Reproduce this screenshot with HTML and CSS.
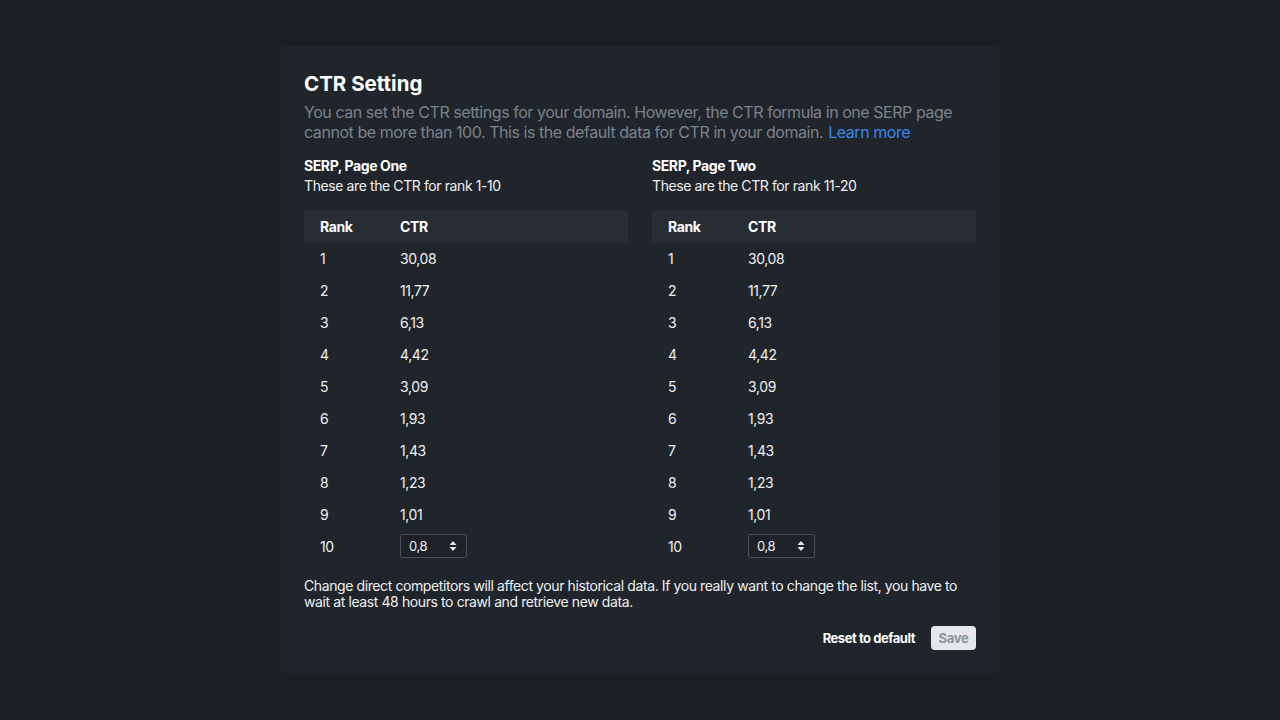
FILE: index.html
```html
<!DOCTYPE html>
<html lang="en">
<head>
<meta charset="utf-8">
<title>CTR Setting</title>
<link rel="stylesheet" href="styles.css">
</head>
<body>
<div class="card">
  <h1 class="title">CTR Setting</h1>
  <p class="desc">You can set the CTR settings for your domain. However, the CTR formula in one SERP page cannot be more than 100. This is the default data for CTR in your domain. <a class="link" href="#">Learn more</a></p>
  <div class="cols">
    <div class="col">
      <div class="sec-title">SERP, Page One</div>
      <div class="sec-sub">These are the CTR for rank 1-10</div>
      <table class="tbl">
        <thead><tr><th class="c-rank">Rank</th><th>CTR</th></tr></thead>
        <tbody>
          <tr><td class="c-rank">1</td><td>30,08</td></tr>
          <tr><td class="c-rank">2</td><td>11,77</td></tr>
          <tr><td class="c-rank">3</td><td>6,13</td></tr>
          <tr><td class="c-rank">4</td><td>4,42</td></tr>
          <tr><td class="c-rank">5</td><td>3,09</td></tr>
          <tr><td class="c-rank">6</td><td>1,93</td></tr>
          <tr><td class="c-rank">7</td><td>1,43</td></tr>
          <tr><td class="c-rank">8</td><td>1,23</td></tr>
          <tr><td class="c-rank">9</td><td>1,01</td></tr>
          <tr><td class="c-rank">10</td><td><span class="num"><span>0,8</span><svg class="spin" width="8" height="12" viewBox="0 0 8 12"><path d="M4 1 L7.5 5 H0.5 Z M4 11 L7.5 7 H0.5 Z" fill="#e6e8eb"/></svg></span></td></tr>
        </tbody>
      </table>
    </div>
    <div class="col">
      <div class="sec-title">SERP, Page Two</div>
      <div class="sec-sub">These are the CTR for rank 11-20</div>
      <table class="tbl">
        <thead><tr><th class="c-rank">Rank</th><th>CTR</th></tr></thead>
        <tbody>
          <tr><td class="c-rank">1</td><td>30,08</td></tr>
          <tr><td class="c-rank">2</td><td>11,77</td></tr>
          <tr><td class="c-rank">3</td><td>6,13</td></tr>
          <tr><td class="c-rank">4</td><td>4,42</td></tr>
          <tr><td class="c-rank">5</td><td>3,09</td></tr>
          <tr><td class="c-rank">6</td><td>1,93</td></tr>
          <tr><td class="c-rank">7</td><td>1,43</td></tr>
          <tr><td class="c-rank">8</td><td>1,23</td></tr>
          <tr><td class="c-rank">9</td><td>1,01</td></tr>
          <tr><td class="c-rank">10</td><td><span class="num"><span>0,8</span><svg class="spin" width="8" height="12" viewBox="0 0 8 12"><path d="M4 1 L7.5 5 H0.5 Z M4 11 L7.5 7 H0.5 Z" fill="#e6e8eb"/></svg></span></td></tr>
        </tbody>
      </table>
    </div>
  </div>
  <p class="note">Change direct competitors will affect your historical data. If you really want to change the list, you have to wait at least 48 hours to crawl and retrieve new data.</p>
  <div class="actions">
    <button class="btn-reset">Reset to default</button>
    <button class="btn-save">Save</button>
  </div>
</div>
</body>
</html>
```

FILE: styles.css
```css
* { box-sizing: border-box; }
html, body { margin: 0; padding: 0; }
body {
  background: #1b1e23;
  font-family: Inter, "Noto Sans", sans-serif;
  color: #f3f4f6;
  width: 1280px;
  height: 720px;
  padding-top: 46px;
  letter-spacing: -0.025em;
}
.card {
  width: 720px;
  margin: 0 auto;
  background: #20252b;
  border-radius: 6px;
  padding: 24px 24px 23px;
}
.title {
  margin: 0;
  font-size: 20.5px;
  line-height: 28px;
  font-weight: 700;
  letter-spacing: 0;
  color: #ffffff;
}
.desc {
  margin: 4px 0 0;
  font-size: 16px;
  line-height: 20px;
  letter-spacing: -0.028em;
  color: #7b828c;
}
.link { color: #3b86f0; text-decoration: none; margin-left: 1px; }
.cols {
  display: flex;
  gap: 24px;
  margin-top: 14px;
}
.col { flex: 1; }
.sec-title {
  font-size: 14px;
  line-height: 20px;
  font-weight: 700;
  color: #ffffff;
}
.sec-sub {
  font-size: 14px;
  line-height: 20px;
  color: #eef0f2;
}
.tbl {
  margin-top: 14px;
  width: 100%;
  border-collapse: collapse;
  font-size: 14px;
}
.tbl th, .tbl td {
  height: 32px;
  padding: 0;
  text-align: left;
  vertical-align: middle;
}
.tbl thead tr { background: #282d35; }
.tbl th { font-weight: 700; color: #ffffff; }
.tbl td { color: #eef0f2; }
.c-rank { width: 96px; padding-left: 16px !important; }
.num {
  display: inline-flex;
  align-items: center;
  justify-content: space-between;
  width: 67px;
  height: 24px;
  padding: 0 9px 0 8px;
  border: 1px solid #4a5059;
  border-radius: 2px;
  background: #1e2228;
  font-size: 13px;
  color: #eef0f2;
  vertical-align: middle;
}
.spin { display: block; }
.note {
  margin: 16px 0 0;
  font-size: 14px;
  line-height: 16px;
  color: #eef0f2;
}
.actions {
  display: flex;
  justify-content: flex-end;
  align-items: center;
  gap: 16px;
  margin-top: 16px;
}
.btn-reset {
  background: none;
  border: none;
  padding: 0;
  font-family: inherit;
  font-size: 13px;
  font-weight: 700;
  letter-spacing: -0.035em;
  color: #ffffff;
}
.btn-save {
  background: #e5e7ea;
  border: none;
  border-radius: 4px;
  height: 24px;
  width: 45px;
  padding: 0;
  font-family: inherit;
  font-size: 13px;
  font-weight: 700;
  letter-spacing: -0.02em;
  color: #8e939a;
}
```
